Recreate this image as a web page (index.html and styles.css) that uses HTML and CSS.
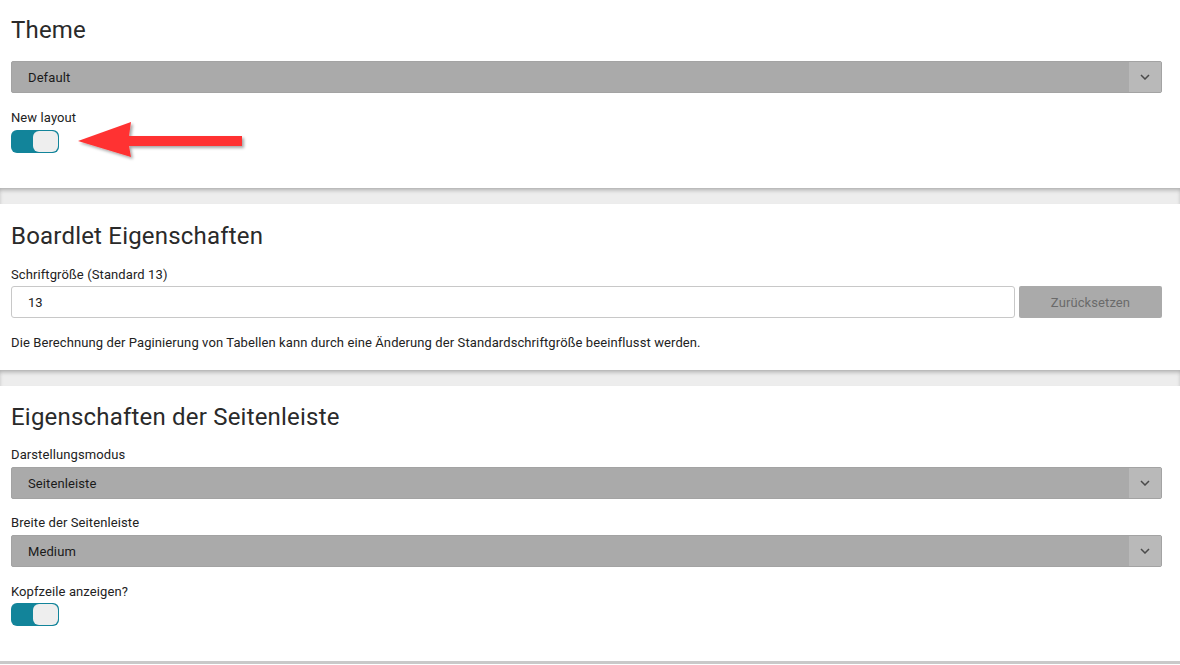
FILE: index.html
```html
<!DOCTYPE html>
<html lang="de">
<head>
<meta charset="utf-8">
<title>Einstellungen</title>
<link rel="stylesheet" href="styles.css">
</head>
<body>
<div class="page">
  <section class="card card-theme">
    <h2 class="title">Theme</h2>
    <div class="select">
      <span class="select-value">Default</span>
      <span class="select-arrow"><svg width="10" height="6" viewBox="0 0 10 6"><path d="M1 1l4 4 4-4" fill="none" stroke="#4a4a4a" stroke-width="1.5"/></svg></span>
    </div>
    <div class="field field-toggle">
      <label class="label">New layout</label>
      <div class="toggle"><span class="knob"></span></div>
    </div>
    <svg class="callout" width="180" height="50" viewBox="0 0 180 50">
      <defs>
        <filter id="sh" x="-10%" y="-20%" width="130%" height="160%">
          <feDropShadow dx="2" dy="2" stdDeviation="1.5" flood-color="#000" flood-opacity="0.35"/>
        </filter>
      </defs>
      <polygon filter="url(#sh)" fill="#ff3333" points="8,26 61,7 59,21 172,21 172,31 59,31 61,42"/>
    </svg>
  </section>
  <div class="band"></div>
  <section class="card">
    <h2 class="title">Boardlet Eigenschaften</h2>
    <div class="field">
      <label class="label label-tight">Schriftgröße (Standard 13)</label>
      <div class="input-row">
        <div class="input">13</div>
        <button class="btn" type="button">Zurücksetzen</button>
      </div>
    </div>
    <p class="hint">Die Berechnung der Paginierung von Tabellen kann durch eine Änderung der Standardschriftgröße beeinflusst werden.</p>
  </section>
  <div class="band"></div>
  <section class="card card-last">
    <h2 class="title">Eigenschaften der Seitenleiste</h2>
    <div class="field field-first">
      <label class="label">Darstellungsmodus</label>
      <div class="select">
        <span class="select-value">Seitenleiste</span>
        <span class="select-arrow"><svg width="10" height="6" viewBox="0 0 10 6"><path d="M1 1l4 4 4-4" fill="none" stroke="#4a4a4a" stroke-width="1.5"/></svg></span>
      </div>
    </div>
    <div class="field">
      <label class="label">Breite der Seitenleiste</label>
      <div class="select">
        <span class="select-value">Medium</span>
        <span class="select-arrow"><svg width="10" height="6" viewBox="0 0 10 6"><path d="M1 1l4 4 4-4" fill="none" stroke="#4a4a4a" stroke-width="1.5"/></svg></span>
      </div>
    </div>
    <div class="field field-toggle-last">
      <label class="label label-tight">Kopfzeile anzeigen?</label>
      <div class="toggle"><span class="knob"></span></div>
    </div>
  </section>
  <div class="bottom-line"></div>
</div>
</body>
</html>
```

FILE: styles.css
```css
* { box-sizing: border-box; }
html, body { margin: 0; padding: 0; background: #fff; }
body {
  font-family: Roboto, "Liberation Sans", Arial, sans-serif;
  color: #222;
  font-size: 13px;
  width: 1180px;
  height: 665px;
  overflow: hidden;
}
.page { display: flex; flex-direction: column; }
.card {
  position: relative;
  background: #fff;
  padding: 17px 18px 19px 11px;
}
.card-theme { padding-top: 15px; padding-bottom: 35px; }
.card-last { padding-top: 16px; padding-bottom: 35px; }
.title {
  margin: 0;
  font-size: 24px;
  line-height: 30px;
  font-weight: 400;
  letter-spacing: 0.2px;
  color: #2a2a2a;
}
.card > .title + .select { margin-top: 16px; }
.field { margin-top: 16px; display: flex; flex-direction: column; }
.field-toggle { margin-top: 17px; }
.field-first { margin-top: 15px; }
.field-toggle-last { margin-top: 17px; }
.label {
  display: block;
  font-size: 13px;
  line-height: 16px;
  margin-bottom: 4px;
  letter-spacing: 0.1px;
  color: #222;
}
.label-tight { margin-bottom: 3px; }
.select {
  display: flex;
  height: 32px;
  background: #aaaaaa;
  border: 1px solid #a3a3a3;
  border-radius: 2px;
}
.select-value {
  flex: 1;
  display: flex;
  align-items: center;
  padding-left: 16px;
  font-size: 13px;
  letter-spacing: 0.1px;
  color: #1a1a1a;
}
.select-arrow {
  width: 32px;
  display: flex;
  align-items: center;
  justify-content: center;
  background: #b9b9b9;
}
.toggle {
  width: 48px;
  height: 23px;
  border-radius: 6px;
  background: #12849a;
  display: flex;
  justify-content: flex-end;
  padding: 1px;
}
.knob {
  width: 25px;
  height: 21px;
  border-radius: 6px;
  background: #eeeeee;
}
.input-row { display: flex; gap: 4px; }
.input {
  flex: 1;
  height: 32px;
  border: 1px solid #c8c8c8;
  border-radius: 3px;
  display: flex;
  align-items: center;
  padding-left: 16px;
  font-size: 13px;
  color: #222;
}
.btn {
  width: 143px;
  height: 32px;
  border: none;
  border-radius: 2px;
  background: #aaaaaa;
  color: #6a6a6a;
  font-family: inherit;
  font-size: 13px;
  letter-spacing: 0.1px;
  padding: 0;
}
.hint {
  margin: 17px 0 0;
  font-size: 13px;
  line-height: 16px;
  letter-spacing: 0.1px;
  color: #222;
}
.band {
  height: 16px;
  background: #ededed;
  box-shadow: inset 0 3px 4px -1px rgba(0,0,0,0.28);
}
.bottom-line { height: 3px; background: #c9c9c9; }
.callout {
  position: absolute;
  left: 70px;
  top: 115px;
}
```
